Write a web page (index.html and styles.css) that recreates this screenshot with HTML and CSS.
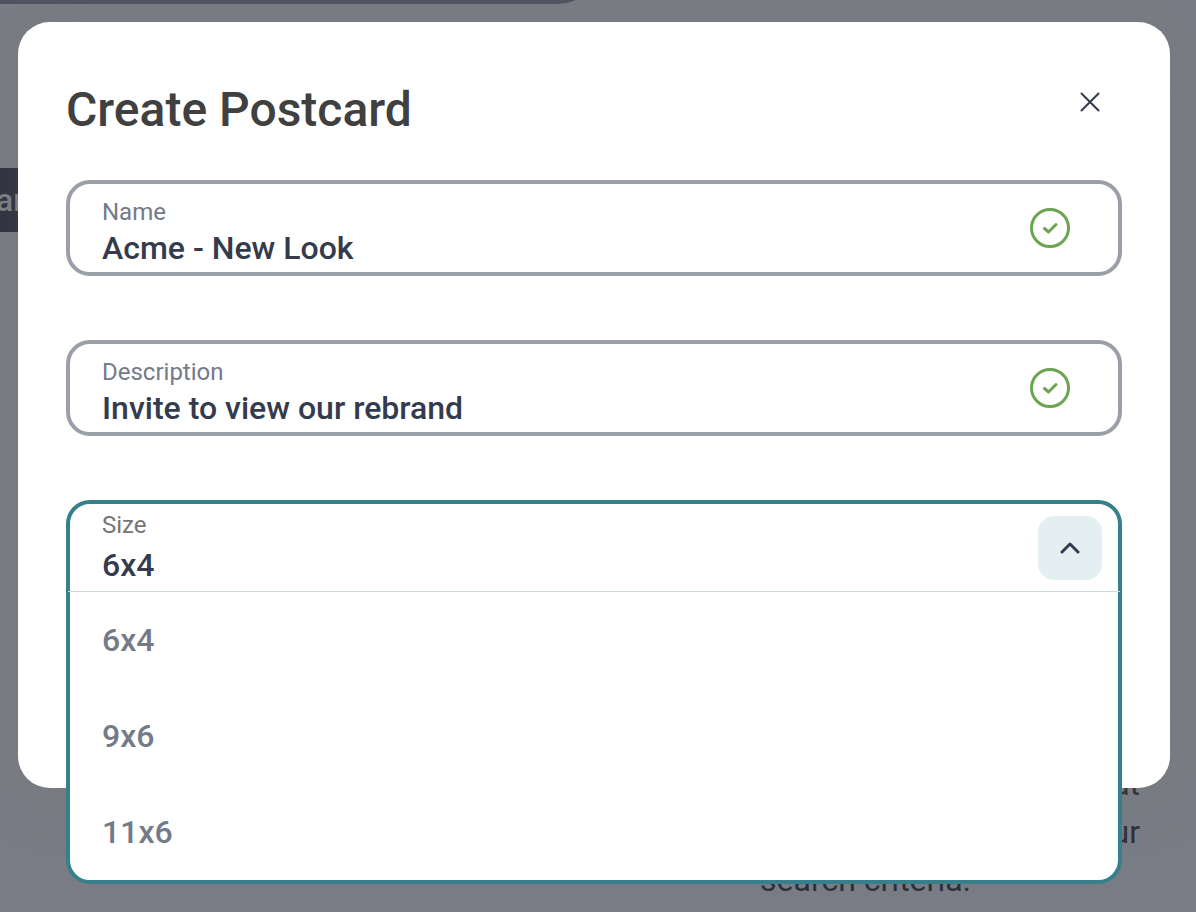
FILE: index.html
```
<!DOCTYPE html>
<html lang="en">
<head>
    <meta charset="UTF-8">
    <meta name="viewport" content="width=device-width, initial-scale=1.0">
    <title>Create Postcard</title>
    <link rel="stylesheet" href="styles.css">
</head>
<body>
    <div class="page">
        <div class="banner"></div>
        <div class="nav-tab">ar</div>
        <div class="copy">
            <p class="copy-end">at</p>
            <p class="copy-end">ur</p>
            <p>search criteria.</p>
        </div>
    </div>

    <div class="overlay">
        <div class="modal" role="dialog" aria-modal="true" aria-labelledby="modalTitle">
            <div class="modal-header">
                <h1 id="modalTitle">Create Postcard</h1>
                <button class="close-btn" type="button" aria-label="Close">
                    <svg width="20" height="20" viewBox="0 0 20 20">
                        <path d="M1.5 1.500l17 17M18.500 1.500l-17 17"/>
                    </svg>
                </button>
            </div>

            <form class="form">
                <div class="field">
                    <div class="field-text">
                        <label for="name">Name</label>
                        <input type="text" id="name" value="Acme - New Look">
                    </div>
                    <svg class="valid" width="40" height="40" viewBox="0 0 40 40">
                        <circle cx="20" cy="20" r="18.5"/>
                        <path d="M14.5 20.5l4 3.500 7.500-7.500"/>
                    </svg>
                </div>

                <div class="field">
                    <div class="field-text">
                        <label for="description">Description</label>
                        <input type="text" id="description" value="Invite to view our rebrand">
                    </div>
                    <svg class="valid" width="40" height="40" viewBox="0 0 40 40">
                        <circle cx="20" cy="20" r="18.5"/>
                        <path d="M14.5 20.5l4 3.500 7.500-7.500"/>
                    </svg>
                </div>

                <div class="dropdown-slot">
                    <div class="dropdown">
                        <div class="dropdown-header">
                            <div class="field-text">
                                <label for="size">Size</label>
                                <select id="size">
                                    <option selected>6x4</option>
                                    <option>9x6</option>
                                    <option>11x6</option>
                                </select>
                            </div>
                            <button class="toggle-btn" type="button" aria-label="Close size list">
                                <svg width="20" height="12" viewBox="0 0 20 12">
                                    <path d="M2 10l8-8 8 8"/>
                                </svg>
                            </button>
                        </div>
                        <div class="dropdown-list">
                            <button class="dropdown-item" type="button">6x4</button>
                            <button class="dropdown-item" type="button">9x6</button>
                            <button class="dropdown-item" type="button">11x6</button>
                        </div>
                    </div>
                </div>
            </form>
        </div>
    </div>
</body>
</html>
```
FILE: styles.css
```
* {
    margin: 0;
    padding: 0;
    box-sizing: border-box;
}

body {
    font-family: Roboto, sans-serif;
    font-size: 32px;
    background: #797c84;
    min-height: 100vh;
    overflow: hidden;
}

button,
input,
select {
    font: inherit;
    color: inherit;
    background: none;
    border: none;
    outline: none;
}

/* Dimmed page behind the modal */
.page {
    display: flex;
    flex-direction: column;
    height: 100vh;
    overflow: hidden;
}

.banner {
    width: 50%;
    height: 64px;
    margin-top: -60px;
    flex-shrink: 0;
    background: #50525f;
    border-radius: 0 0 40px 0;
}

.nav-tab {
    width: 64px;
    height: 64px;
    margin-top: 164px;
    flex-shrink: 0;
    font-weight: 500;
    line-height: 64px;
    text-indent: -4px;
    background: #2d303f;
    color: #7d7e84;
}

.copy {
    width: 380px;
    margin: auto 56px 8px auto;
    line-height: 48px;
    color: #2d3038;
}

.copy-end {
    text-align: right;
}

.overlay {
    position: absolute;
    inset: 0;
    padding: 22px 26px 0 18px;
}

.modal {
    padding: 48px 48px 192px;
    background: #fff;
    border-radius: 32px;
    box-shadow: 0 0 64px rgba(124, 118, 112, 0.25);
}

.modal-header {
    display: flex;
    justify-content: space-between;
    align-items: flex-start;
    margin-bottom: 30px;
}

h1 {
    font-size: 48px;
    font-weight: 500;
    line-height: 80px;
    color: #404040;
}

svg {
    display: block;
    flex-shrink: 0;
    fill: none;
    stroke: #343b4d;
    stroke-width: 2;
    stroke-linecap: round;
    stroke-linejoin: round;
}

.close-btn,
.toggle-btn {
    display: flex;
    justify-content: center;
    align-items: center;
    width: 64px;
    height: 64px;
    flex-shrink: 0;
    cursor: pointer;
}

.form {
    display: flex;
    flex-direction: column;
    gap: 64px;
}

.field {
    display: flex;
    align-items: center;
    height: 96px;
    padding: 0 48px 0 32px;
    border: 4px solid #9a9fa9;
    border-radius: 24px;
}

.field-text {
    display: flex;
    flex-direction: column;
    flex: 1;
    min-width: 0;
}

.field .field-text {
    padding-top: 8px;
}

label {
    font-size: 24px;
    line-height: 32px;
    color: #747a88;
}

input,
select {
    width: 100%;
    height: 40px;
    font-weight: 500;
    line-height: 40px;
    color: #343b4d;
    appearance: none;
}

.valid {
    stroke: #6ba54f;
    stroke-width: 3;
}

/* The open list hangs over the bottom edge of the modal */
.dropdown-slot {
    position: relative;
    height: 96px;
}

.dropdown {
    position: absolute;
    top: 0;
    left: 0;
    right: 0;
    background: #fff;
    border: 4px solid #35808b;
    border-radius: 24px;
}

.dropdown-header {
    display: flex;
    align-items: center;
    height: 88px;
    margin: 0 -2px;
    padding: 0 18px 0 34px;
    border-bottom: 1px solid #cdd8df;
}

.dropdown-header .field-text {
    gap: 4px;
    padding-bottom: 4px;
}

.dropdown-header select {
    height: 38px;
}

.dropdown-header label {
    color: #757575;
}

.toggle-btn {
    background: #e4eff1;
    border-radius: 16px;
}

.toggle-btn svg {
    stroke-width: 3;
}

.dropdown-list {
    display: flex;
    flex-direction: column;
}

.dropdown-item {
    height: 96px;
    padding: 0 32px;
    font-weight: 500;
    text-align: left;
    color: #747a88;
    cursor: pointer;
}
```
